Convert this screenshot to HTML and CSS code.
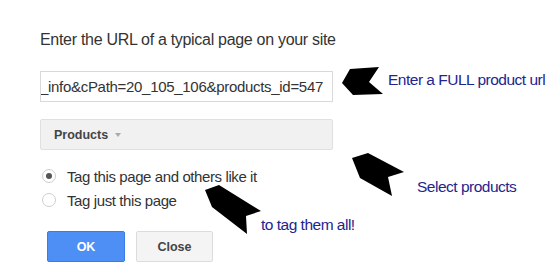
FILE: index.html
```
<!DOCTYPE html>
<html>
<head>
<meta charset="utf-8"/>
<title>Tag a page</title>
<link rel="stylesheet" href="styles.css">
</head>
<body>
<div class="stage">

  <div class="dialog">
    <h1 class="title">Enter the URL of a typical page on your site</h1>

    <div class="url-field"><span>_info&amp;cPath=20_105_106&amp;products_id=547</span></div>

    <div class="select">
      <span class="select-label">Products</span>
      <span class="caret"></span>
    </div>

    <div class="options">
      <label class="option"><span class="radio checked"></span>Tag this page and others like it</label>
      <label class="option"><span class="radio"></span>Tag just this page</label>
    </div>

    <div class="actions">
      <button class="btn btn-ok">OK</button>
      <button class="btn btn-close">Close</button>
    </div>
  </div>

  <!-- hand drawn notes on top of the dialog -->
  <svg class="arrows" width="550" height="267" viewBox="0 0 550 267">
    <polygon points="342,83 350,69 379,67 369,82 383,94 353,95"/>
    <polygon points="352,158 368,153 404,172 388,177 392,196 360,178"/>
    <polygon points="205,190 219,185 261,211 246,216 247,234 212,207"/>
  </svg>
  <span class="note note-url">Enter a FULL product url</span>
  <span class="note note-select">Select products</span>
  <span class="note note-tag">to tag them all!</span>

</div>
</body>
</html>
```

FILE: styles.css
```
body {
  margin: 0;
  background-color: white;
  font-family: "Liberation Sans", Arial, sans-serif;
  color: #333;
}

.stage {
  position: relative;
  width: 550px;
  height: 267px;
  overflow: hidden;
}

.dialog {
  padding: 30px 0 0 40px;
  width: 293px;
}

.title {
  margin: 0;
  font-size: 16px;
  font-weight: normal;
  line-height: 20px;
  letter-spacing: -0.3px;
  white-space: nowrap;
  color: #333;
}

.url-field {
  margin-top: 21px;
  height: 29px;
  border: 1px solid #d9d9d9;
  padding: 0 9px 0 3px;
  display: flex;
  justify-content: flex-end;
  align-items: center;
  overflow: hidden;
  white-space: nowrap;
  font-size: 15px;
  letter-spacing: -0.3px;
  line-height: 29px;
  color: #333;
}

.select {
  margin-top: 17px;
  height: 29px;
  border: 1px solid #e0e0e0;
  border-radius: 2px;
  background-color: #f1f1f1;
  padding-left: 13px;
  display: flex;
  align-items: center;
  gap: 7px;
}

.select-label {
  font-size: 12.5px;
  font-weight: bold;
  color: #444;
}

.caret {
  width: 0;
  height: 0;
  border-left: 3px solid transparent;
  border-right: 3px solid transparent;
  border-top: 4px solid #aaa;
}

.options {
  margin-top: 14px;
  display: flex;
  flex-direction: column;
}

.option {
  display: flex;
  align-items: center;
  gap: 11px;
  height: 24px;
  padding-left: 2px;
  font-size: 15px;
  letter-spacing: -0.4px;
  color: #333;
  white-space: nowrap;
}

.radio {
  width: 12px;
  height: 12px;
  border: 1px solid #cfcfcf;
  border-radius: 50%;
  background-color: white;
  display: flex;
  align-items: center;
  justify-content: center;
}

.radio.checked::after {
  content: "";
  width: 6px;
  height: 6px;
  border-radius: 50%;
  background-color: #555;
}

.actions {
  margin-top: 19px;
  padding-left: 7px;
  display: flex;
  gap: 11px;
}

.btn {
  height: 31px;
  border-radius: 2px;
  font-family: "Liberation Sans", Arial, sans-serif;
  font-size: 12.5px;
  font-weight: bold;
  padding: 0;
}

.btn-ok {
  width: 78px;
  background-color: #4d8ff5;
  border: 1px solid #3a7be6;
  color: white;
}

.btn-close {
  width: 77px;
  background-color: #f4f4f4;
  border: 1px solid #dcdcdc;
  color: #444;
}

.arrows {
  position: absolute;
  left: 0;
  top: 0;
  pointer-events: none;
}

.arrows polygon {
  fill: #000;
}

.note {
  position: absolute;
  font-size: 15.5px;
  letter-spacing: -0.5px;
  line-height: 18px;
  color: #24248e;
  white-space: nowrap;
}

.note-url {
  left: 388px;
  top: 71px;
}

.note-select {
  left: 417px;
  top: 178px;
}

.note-tag {
  left: 261px;
  top: 216px;
}
```
